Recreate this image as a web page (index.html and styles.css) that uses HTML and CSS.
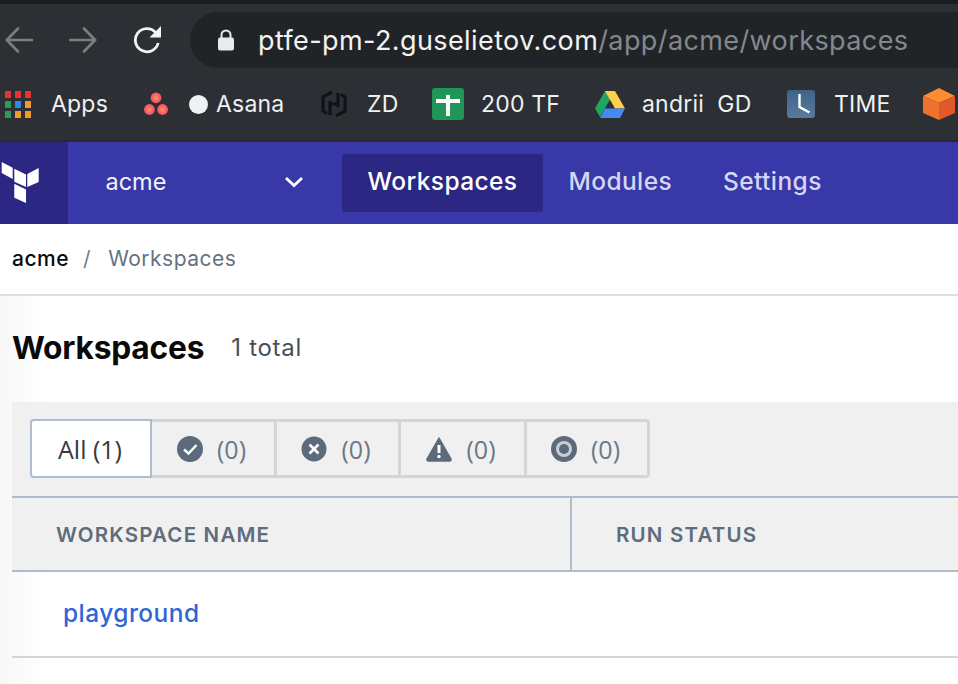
FILE: index.html
```html
<!DOCTYPE html>
<html lang="en">
<head>
<meta charset="utf-8">
<title>Workspaces</title>
<link rel="stylesheet" href="styles.css">
</head>
<body>
<div class="topstrip"></div>
<header class="toolbar">
  <div class="navbtns">
    <svg class="ic-back" width="28" height="28" viewBox="0 0 28 28"><path d="M27 14H2M13 2.500 1.800 14 13 25.500" fill="none" stroke="#7b7e81" stroke-width="2.600" stroke-linecap="round" stroke-linejoin="round"/></svg>
    <svg class="ic-fwd" width="28" height="28" viewBox="0 0 28 28"><path d="M1 14h25M15 2.500 26.200 14 15 25.500" fill="none" stroke="#7b7e81" stroke-width="2.600" stroke-linecap="round" stroke-linejoin="round"/></svg>
    <svg class="ic-reload" width="30" height="30" viewBox="0 0 30 30"><path d="M25.200 18a11.600 11.600 0 1 1-2.600-10.600" fill="none" stroke="#f1f3f4" stroke-width="2.800"/><path d="M28 1v11.500H16.500z" fill="#f1f3f4"/></svg>
  </div>
  <div class="omnibox">
    <svg width="18" height="22" viewBox="0 0 18 22"><path d="M4.500 9V6a4.500 4.500 0 0 1 9 0v3" fill="none" stroke="#e8eaed" stroke-width="2"/><rect x="1" y="8.500" width="16" height="13" rx="2" fill="#e8eaed"/></svg>
    <div class="url">ptfe-pm-2.guselietov.com<span class="url-path">/app/acme/workspaces</span></div>
  </div>
</header>
<nav class="bookmarks">
  <div class="bm bm-apps">
    <div class="appgrid">
      <i class="r"></i><i class="r"></i><i class="r"></i>
      <i class="g"></i><i class="b"></i><i class="o"></i>
      <i class="g"></i><i class="o"></i><i class="o"></i>
    </div>
    <span>Apps</span>
  </div>
  <div class="bm bm-asana">
    <svg width="24" height="24" viewBox="0 0 24 24"><defs><radialGradient id="as" cx=".5" cy=".5" r=".6"><stop offset="0" stop-color="#ff9a50"/><stop offset=".55" stop-color="#f9606a"/><stop offset="1" stop-color="#f4486b"/></radialGradient></defs><circle cx="12" cy="5.800" r="5.400" fill="url(#as)"/><circle cx="5.400" cy="17.500" r="5.400" fill="url(#as)"/><circle cx="18.600" cy="17.500" r="5.400" fill="url(#as)"/></svg>
    <i class="dot"></i>
    <span>Asana</span>
  </div>
  <div class="bm bm-zd">
    <svg width="30" height="30" viewBox="0 0 30 30"><path d="M13 3 4 8v14l4 2.500M17 27l9-5V8l-4-2.500M11 26V12M19 18V4M11 15h8" fill="none" stroke="#0e1116" stroke-width="3"/></svg>
    <span>ZD</span>
  </div>
  <div class="bm bm-sheet">
    <div class="sheet"><i class="sh-h"></i><i class="sh-v"></i></div>
    <span>200 TF</span>
  </div>
  <div class="bm bm-drive">
    <svg width="30" height="27" viewBox="0 0 30 27"><path d="M10 0h10L10.500 16.500 5 26 0 17.500z" fill="#1fa463"/><path d="M10 0h10l10 17.500H20z" fill="#ffd04b"/><path d="M10 17.500h20L25 27H5z" fill="#4688f4"/></svg>
    <span>andrii&nbsp; GD</span>
  </div>
  <div class="bm bm-time">
    <div class="clock"><svg width="28" height="28" viewBox="0 0 28 28"><path d="M12.500 4v13l10 5.500" fill="none" stroke="#fff" stroke-width="2.400"/></svg></div>
    <span>TIME</span>
  </div>
  <div class="bm bm-cube">
    <svg width="32" height="32" viewBox="0 0 32 32"><path d="M16 0 32 8 16 15 0 8z" fill="#fb8c32"/><path d="M0 8l16 7v17L0 25z" fill="#f0702d"/><path d="M32 8 16 15v17l16-7z" fill="#e0592a"/></svg>
  </div>
</nav>
<div class="appnav">
  <div class="logo">
    <svg width="40" height="42" viewBox="0 0 40 42"><path d="M1.700 0 12.700 5.700V17L1.700 11zM14.300 6.700 26 12.400V25L14.300 19.700zM38.700 6V20L27.300 25V12zM14.300 21.700 26 27.400V41L14.300 35.700z" fill="#fff"/></svg>
  </div>
  <div class="org">
    <span>acme</span>
    <svg width="20" height="12" viewBox="0 0 20 12"><path d="M2 2l8 7.500L18 2" fill="none" stroke="#fff" stroke-width="2.800"/></svg>
  </div>
  <div class="navlinks">
    <a class="navlink active">Workspaces</a>
    <a class="navlink">Modules</a>
    <a class="navlink">Settings</a>
  </div>
</div>
<div class="breadcrumb">
  <span class="crumb-root">acme</span><span class="crumb-sep">/</span><span class="crumb-cur">Workspaces</span>
</div>
<main class="content">
  <div class="title-row">
    <h1>Workspaces</h1><span class="total">1 total</span>
  </div>
  <section class="panel">
    <div class="filters">
      <div class="tabs">
        <div class="tab tab-all active">All (1)</div>
        <div class="tab tab-ok">
          <svg width="26" height="26" viewBox="0 0 26 26"><circle cx="13" cy="13" r="13" fill="#5c6b7c"/><path d="M7 13.500l4.500 4L19.500 9" fill="none" stroke="#fff" stroke-width="2.400"/></svg>
          <span>(0)</span>
        </div>
        <div class="tab tab-err">
          <svg width="26" height="26" viewBox="0 0 26 26"><circle cx="13" cy="13" r="12.500" fill="#5c6b7c"/><path d="M8.500 8.500l9 9M17.500 8.500l-9 9" fill="none" stroke="#fff" stroke-width="2.600"/></svg>
          <span>(0)</span>
        </div>
        <div class="tab tab-warn">
          <svg width="26" height="26" viewBox="0 0 26 26"><path d="M13 2 25 23a1.500 1.500 0 0 1-1.500 2h-21A1.500 1.500 0 0 1 1 23z" fill="#5c6b7c" stroke="#5c6b7c" stroke-linejoin="round" stroke-width="1.500"/><path d="M13 9v8" stroke="#fff" stroke-width="3"/><circle cx="13" cy="20.500" r="1.700" fill="#fff"/></svg>
          <span>(0)</span>
        </div>
        <div class="tab tab-pend">
          <svg width="26" height="26" viewBox="0 0 26 26"><circle cx="13" cy="13" r="13" fill="#5c6b7c"/><circle cx="13" cy="13" r="8" fill="#c9ced4"/><circle cx="13" cy="13" r="5" fill="#5c6b7c"/></svg>
          <span>(0)</span>
        </div>
      </div>
    </div>
    <div class="thead">
      <div class="th th-name">WORKSPACE NAME</div>
      <div class="th th-status">RUN STATUS</div>
    </div>
    <div class="row"><a class="ws-link">playground</a></div>
  </section>
</main>
</body>
</html>
```
FILE: styles.css
```css
* { box-sizing: border-box; }
html, body { margin: 0; padding: 0; }
body {
  width: 958px;
  height: 684px;
  overflow: hidden;
  background: #fff;
  font-family: Inter, "Liberation Sans", sans-serif;
}
.topstrip { height: 4px; background: #1b1c1f; }
.toolbar {
  height: 64px;
  background: #2c2f33;
  display: flex;
  padding-top: 8px;
}
.navbtns {
  width: 190px;
  height: 56px;
  display: flex;
  align-items: center;
  padding-left: 5px;
}
.ic-fwd { margin-left: 36px; }
.ic-reload { margin-left: 36px; }
.omnibox {
  flex: 1;
  height: 56px;
  background: #212427;
  border-radius: 28px 0 0 28px;
  display: flex;
  align-items: center;
  padding-left: 27px;
  gap: 23px;
  margin-right: -40px;
}
.url { font-size: 27px; color: #f1f3f4; white-space: nowrap; letter-spacing: 0.4px; }
.url-path { color: #84888e; }
.bookmarks {
  height: 72px;
  background: #2c2f33;
  display: flex;
  align-items: center;
  color: #eff1f3;
  font-size: 23px;
  letter-spacing: 0.2px;
  white-space: nowrap;
}
.bm { display: flex; align-items: center; flex: none; }
.bm-apps { width: 144px; padding-left: 5px; gap: 20px; }
.appgrid {
  display: grid;
  grid-template-columns: repeat(3, 6px);
  grid-template-rows: repeat(3, 7px);
  gap: 3px 4px;
}
.appgrid i { display: block; }
.appgrid .r { background: #ee3030; }
.appgrid .g { background: #2e9a58; }
.appgrid .b { background: #2f86ea; }
.appgrid .o { background: #ef9a2a; }
.bm-asana { width: 175px; }
.dot { width: 19px; height: 19px; margin: 0 8px 0 21px; border-radius: 50%; background: #f0f1f3; display: block; }
.bm-zd { width: 113px; gap: 18px; }
.bm-sheet { width: 163px; gap: 17px; }
.sheet { width: 32px; height: 32px; border-radius: 3px; background: #1f9556; position: relative; }
.sh-h { position: absolute; left: 4px; right: 4px; top: 11px; height: 4px; background: #fff; }
.sh-v { position: absolute; left: 14px; top: 7px; bottom: 4px; width: 4px; background: #fff; }
.bm-drive { width: 192px; gap: 17px; }
.bm-time { width: 136px; gap: 19px; }
.clock { width: 28px; height: 28px; border-radius: 3px; background: linear-gradient(#3e6289, #5a7a9c); }
.appnav {
  height: 84px;
  border-top: 2px solid #2a2a2c;
  background: #3838a8;
  display: flex;
  align-items: center;
}
.logo { width: 68px; height: 82px; background: #2c2783; display: flex; align-items: center; }
.org {
  width: 274px;
  display: flex;
  align-items: center;
  justify-content: space-between;
  padding: 0 38px 3px 37.500px;
  color: #f2f2fb;
  font-size: 23.500px;
}
.navlinks { display: flex; font-size: 24.500px; font-weight: 500; letter-spacing: 0.4px; }
.navlink { color: #d6d6f2; padding: 0 25.500px 4px; height: 58px; display: flex; align-items: center; border-radius: 3px; }
.navlink.active { background: #2c2783; color: #fff; }
.breadcrumb {
  height: 72px;
  border-bottom: 2px solid #dcdfe3;
  display: flex;
  align-items: center;
  padding: 0 0 2px 12px;
  font-size: 21px;
  letter-spacing: 0.5px;
}
.crumb-root { color: #0a0a0a; font-weight: 500; }
.crumb-sep { color: #6f7f8f; margin: 0 17px 0 14px; }
.crumb-cur { color: #647282; }
.content {
  padding-left: 12px;
  height: 388px;
  background: linear-gradient(90deg, #f7f7f7, #fff 45px);
}
.title-row { height: 106px; display: flex; align-items: center; padding: 0 0 3px 1px; }
h1 { margin: 0 0 0 -1px; font-size: 31.700px; font-weight: 700; color: #0a0a0a; letter-spacing: -0.2px; }
.total { margin-left: 27px; font-size: 24px; letter-spacing: 0.7px; color: #4a4f55; }
.panel { width: 946px; }
.filters { background: #f0f0f0; height: 96px; padding: 17px 18px; border-bottom: 2px solid #afbccd; }
.tabs { display: inline-flex; height: 59px; border: 3px solid #d5d5d5; border-radius: 4px; }
.tab {
  display: flex;
  align-items: center;
  justify-content: center;
  gap: 14px;
  padding-right: 3px;
  font-family: "Open Sans", sans-serif;
  font-size: 25px;
  color: #6a7887;
  border-left: 3px solid #d5d5d5;
}
.tab-all { width: 122px; margin: -3px 0 -3px -3px; padding-right: 2px; background: #fff; border: 2px solid #afbccd; border-radius: 4px 0 0 4px; color: #37393c; }
.tab-ok { width: 122px; border-left: 0; }
.tab-err { width: 124px; }
.tab-warn { width: 126px; }
.tab-pend { width: 123px; }
.thead { background: #f0f0f0; height: 74px; display: flex; border-bottom: 2px solid #afbccd; }
.th { display: flex; align-items: center; font-size: 20.500px; font-weight: 600; letter-spacing: 1.200px; color: #5f6c7b; }
.th-name { width: 560px; padding-left: 44px; border-right: 2px solid #afbccd; }
.th-status { padding-left: 44px; }
.row { height: 86px; border-bottom: 2px solid #d5d5d5; display: flex; align-items: center; padding: 0 0 2px 51px; }
.ws-link { color: #2f66d6; font-size: 24.500px; font-weight: 550; letter-spacing: 0.45px; }
```
